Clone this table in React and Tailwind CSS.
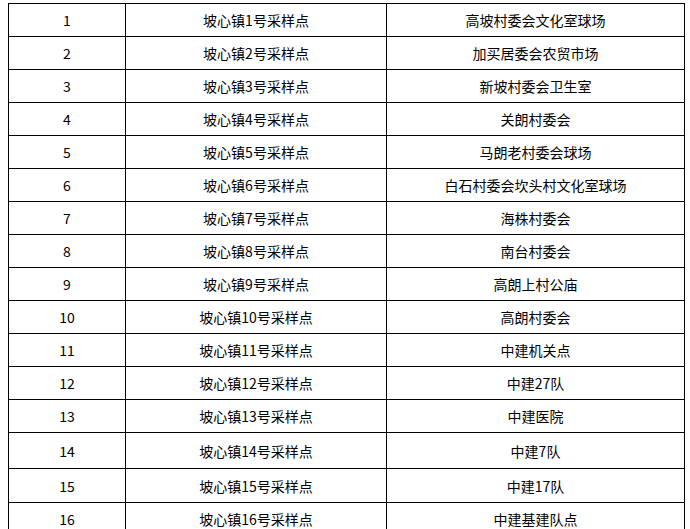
const rows = [
  ["1", "坡心镇1号采样点", "高坡村委会文化室球场", "h-[33px]"],
  ["2", "坡心镇2号采样点", "加买居委会农贸市场", "h-[33px]"],
  ["3", "坡心镇3号采样点", "新坡村委会卫生室", "h-[33px]"],
  ["4", "坡心镇4号采样点", "关朗村委会", "h-[33px]"],
  ["5", "坡心镇5号采样点", "马朗老村委会球场", "h-[33px]"],
  ["6", "坡心镇6号采样点", "白石村委会坎头村文化室球场", "h-[33px]"],
  ["7", "坡心镇7号采样点", "海株村委会", "h-[33px]"],
  ["8", "坡心镇8号采样点", "南台村委会", "h-[33px]"],
  ["9", "坡心镇9号采样点", "高朗上村公庙", "h-[33px]"],
  ["10", "坡心镇10号采样点", "高朗村委会", "h-[33px]"],
  ["11", "坡心镇11号采样点", "中建机关点", "h-[33px]"],
  ["12", "坡心镇12号采样点", "中建27队", "h-[33px]"],
  ["13", "坡心镇13号采样点", "中建医院", "h-[33px]"],
  ["14", "坡心镇14号采样点", "中建7队", "h-[36px]"],
  ["15", "坡心镇15号采样点", "中建17队", "h-[34px]"],
  ["16", "坡心镇16号采样点", "中建基建队点", "h-[33px]"],
];

export default function App() {
  return (
    <div
      className="w-[690px] h-[529px] overflow-hidden bg-white pt-[3px] pl-[8px] text-[14px] text-black"
      style={{ fontFamily: '"Noto Sans CJK SC", "Liberation Sans", sans-serif' }}
    >
      <div className="w-[677px] border-t border-l border-black flex flex-col">
        {rows.map(([n, a, b, h]) => (
          <div key={n} className={`flex ${h} border-b border-black`}>
            <div className="w-[117px] shrink-0 border-r border-black flex items-center justify-center leading-none">
              {n}
            </div>
            <div className="w-[261px] shrink-0 border-r border-black flex items-center justify-center leading-none">
              {a}
            </div>
            <div className="w-[298px] shrink-0 border-r border-black flex items-center justify-center leading-none">
              {b}
            </div>
          </div>
        ))}
      </div>
    </div>
  );
}
